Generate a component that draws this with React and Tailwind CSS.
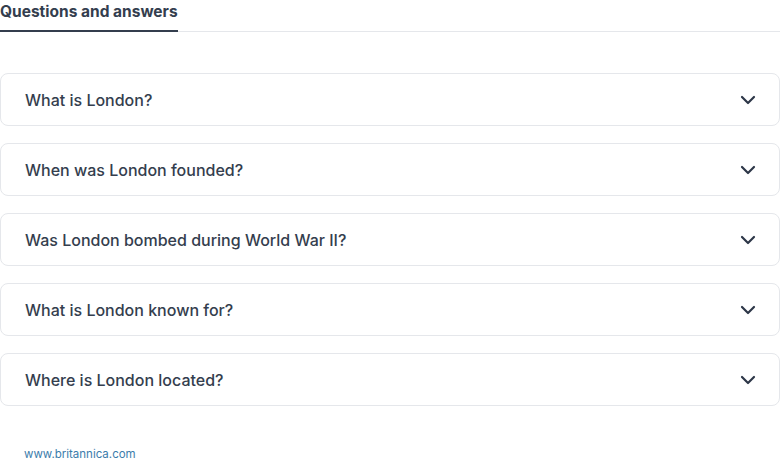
import React from 'react'

const questions = [
  'What is London?',
  'When was London founded?',
  'Was London bombed during World War II?',
  'What is London known for?',
  'Where is London located?'
]

const Chevron = () => (
  <svg width="24" height="24" viewBox="0 0 24 24" fill="none" stroke="#2d3748" strokeWidth="2.2" strokeLinecap="round" strokeLinejoin="round">
    <path d="M6 9l6 6 6-6" />
  </svg>
)

const App = () => {
  return (
    <div className="h-[468px] overflow-hidden bg-white text-[#343e4e]" style={{ fontFamily: 'Inter, "Open Sans", sans-serif' }}>
      {/* Tabs */}
      <div className="flex border-b border-[#e5e7eb]">
        <div className="h-8 border-b-2 border-[#343e4e] -mb-px text-[15.5px] font-bold leading-[24px]">
          Questions and answers
        </div>
      </div>

      {/* Questions */}
      <div className="flex flex-col gap-[17px] mt-[41px]">
        {questions.map((q) => (
          <div key={q} className="flex items-center justify-between h-[53px] pl-6 pr-[19px] border border-[#e5e7eb] rounded-lg">
            <span className="text-[16px] font-medium">{q}</span>
            <Chevron />
          </div>
        ))}
      </div>

      <div className="pl-6 pt-[38px] leading-none">
        <a href="#" className="text-[11.5px] text-[#3c7cab]">www.britannica.com</a>
      </div>
    </div>
  )
}

export default App
